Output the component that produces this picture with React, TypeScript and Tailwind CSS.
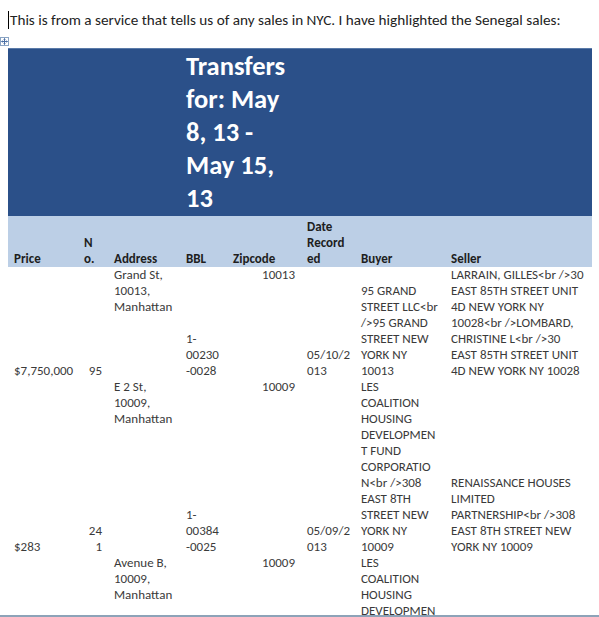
const sales = [
  {
    price: ["$7,750,000"],
    no: ["95"],
    address: ["Grand St,", "10013,", "Manhattan"],
    zip: "10013",
    bbl: ["1-", "00230", "-0028"],
    date: ["05/10/2", "013"],
    buyer: ["95 GRAND", "STREET LLC<br", "/>95 GRAND", "STREET NEW", "YORK NY", "10013"],
    seller: [
      "LARRAIN, GILLES<br />30",
      "EAST 85TH STREET UNIT",
      "4D NEW YORK NY",
      "10028<br />LOMBARD,",
      "CHRISTINE L<br />30",
      "EAST 85TH STREET UNIT",
      "4D NEW YORK NY 10028",
    ],
  },
  {
    price: ["$283"],
    no: ["24", "1"],
    address: ["E 2 St,", "10009,", "Manhattan"],
    zip: "10009",
    bbl: ["1-", "00384", "-0025"],
    date: ["05/09/2", "013"],
    buyer: [
      "LES",
      "COALITION",
      "HOUSING",
      "DEVELOPMEN",
      "T FUND",
      "CORPORATIO",
      "N<br />308",
      "EAST 8TH",
      "STREET NEW",
      "YORK NY",
      "10009",
    ],
    seller: [
      "RENAISSANCE HOUSES",
      "LIMITED",
      "PARTNERSHIP<br />308",
      "EAST 8TH STREET NEW",
      "YORK NY 10009",
    ],
  },
  {
    price: [],
    no: [],
    address: ["Avenue B,", "10009,", "Manhattan"],
    zip: "10009",
    bbl: [],
    date: [],
    buyer: ["LES", "COALITION", "HOUSING", "DEVELOPMEN", "T FUND"],
    seller: [],
  },
];

const cols = "grid grid-cols-[70px_30px_72px_47px_74px_54px_90px_147px]";

function Lines({ lines, className = "" }: { lines: string[]; className?: string }) {
  return (
    <div className={`flex flex-col px-[6px] ${className}`}>
      {lines.map((l, i) => (
        <div key={i} className="h-[16px] whitespace-nowrap leading-[16px]">
          {l}
        </div>
      ))}
    </div>
  );
}

function MoveHandle() {
  return (
    <svg width="9" height="9" viewBox="0 0 9 9" className="absolute left-0 top-[37px]">
      <rect x="0.5" y="0.5" width="8" height="8" fill="#fff" stroke="#8aa4c4" />
      <path d="M4.5 1.5v6M1.5 4.5h6" stroke="#4a6fa5" strokeWidth="1" />
      <path d="M3.5 2.5l1-1 1 1M3.5 6.5l1 1 1-1M2.5 3.5l-1 1 1 1M6.5 3.5l1 1-1 1" stroke="#4a6fa5" strokeWidth="0.8" fill="none" />
    </svg>
  );
}

export default function App() {
  return (
    <div className="relative flex h-[617px] w-[599px] flex-col overflow-hidden bg-white font-[Carlito,Lato,sans-serif] text-[#3a3a3a]">
      <div className="flex-1 overflow-hidden">
        <p className="mt-[10px] flex items-center pl-[8px] text-[15.2px] leading-[20px] text-[#222]">
          <span className="mr-[1px] inline-block h-[18px] w-[1px] bg-black" />
          This is from a service that tells us of any sales in NYC. I have highlighted the Senegal sales:
        </p>
        <MoveHandle />

        <div className="ml-[8px] mt-[18px] w-[584px]">
          <div className={`${cols} h-[168px] border-t border-[#5a7aa8] bg-[#2b5089]`}>
            <div className="col-span-3" />
            <div className="col-span-2 px-[6px] pt-[1px] text-[26.5px] font-bold leading-[33px] text-white">
              <div>Transfers</div>
              <div>for: May</div>
              <div>8, 13 -</div>
              <div>May 15,</div>
              <div>13</div>
            </div>
          </div>

          <div className={`${cols} h-[51px] items-end bg-[#bccfe6] text-[13px] font-bold text-[#1e1e1e]`}>
            <Lines lines={["Price"]} />
            <Lines lines={["N", "o."]} />
            <Lines lines={["Address"]} />
            <Lines lines={["BBL"]} />
            <Lines lines={["Zipcode"]} />
            <Lines lines={["Date", "Record", "ed"]} />
            <Lines lines={["Buyer"]} />
            <Lines lines={["Seller"]} />
          </div>

          {sales.map((s, i) => (
            <div key={i} className={`${cols} text-[13px]`}>
              <Lines lines={s.price} className="self-end" />
              <Lines lines={s.no} className="items-end self-end" />
              <Lines lines={s.address} className="self-start" />
              <Lines lines={s.bbl} className="self-end" />
              <Lines lines={[s.zip]} className="items-end self-start" />
              <Lines lines={s.date} className="self-end" />
              <Lines lines={s.buyer} className="self-end" />
              <Lines lines={s.seller} className="self-end" />
            </div>
          ))}
        </div>
      </div>
      <div className="h-[2px] w-full bg-[#8da3b8]" />
    </div>
  );
}
